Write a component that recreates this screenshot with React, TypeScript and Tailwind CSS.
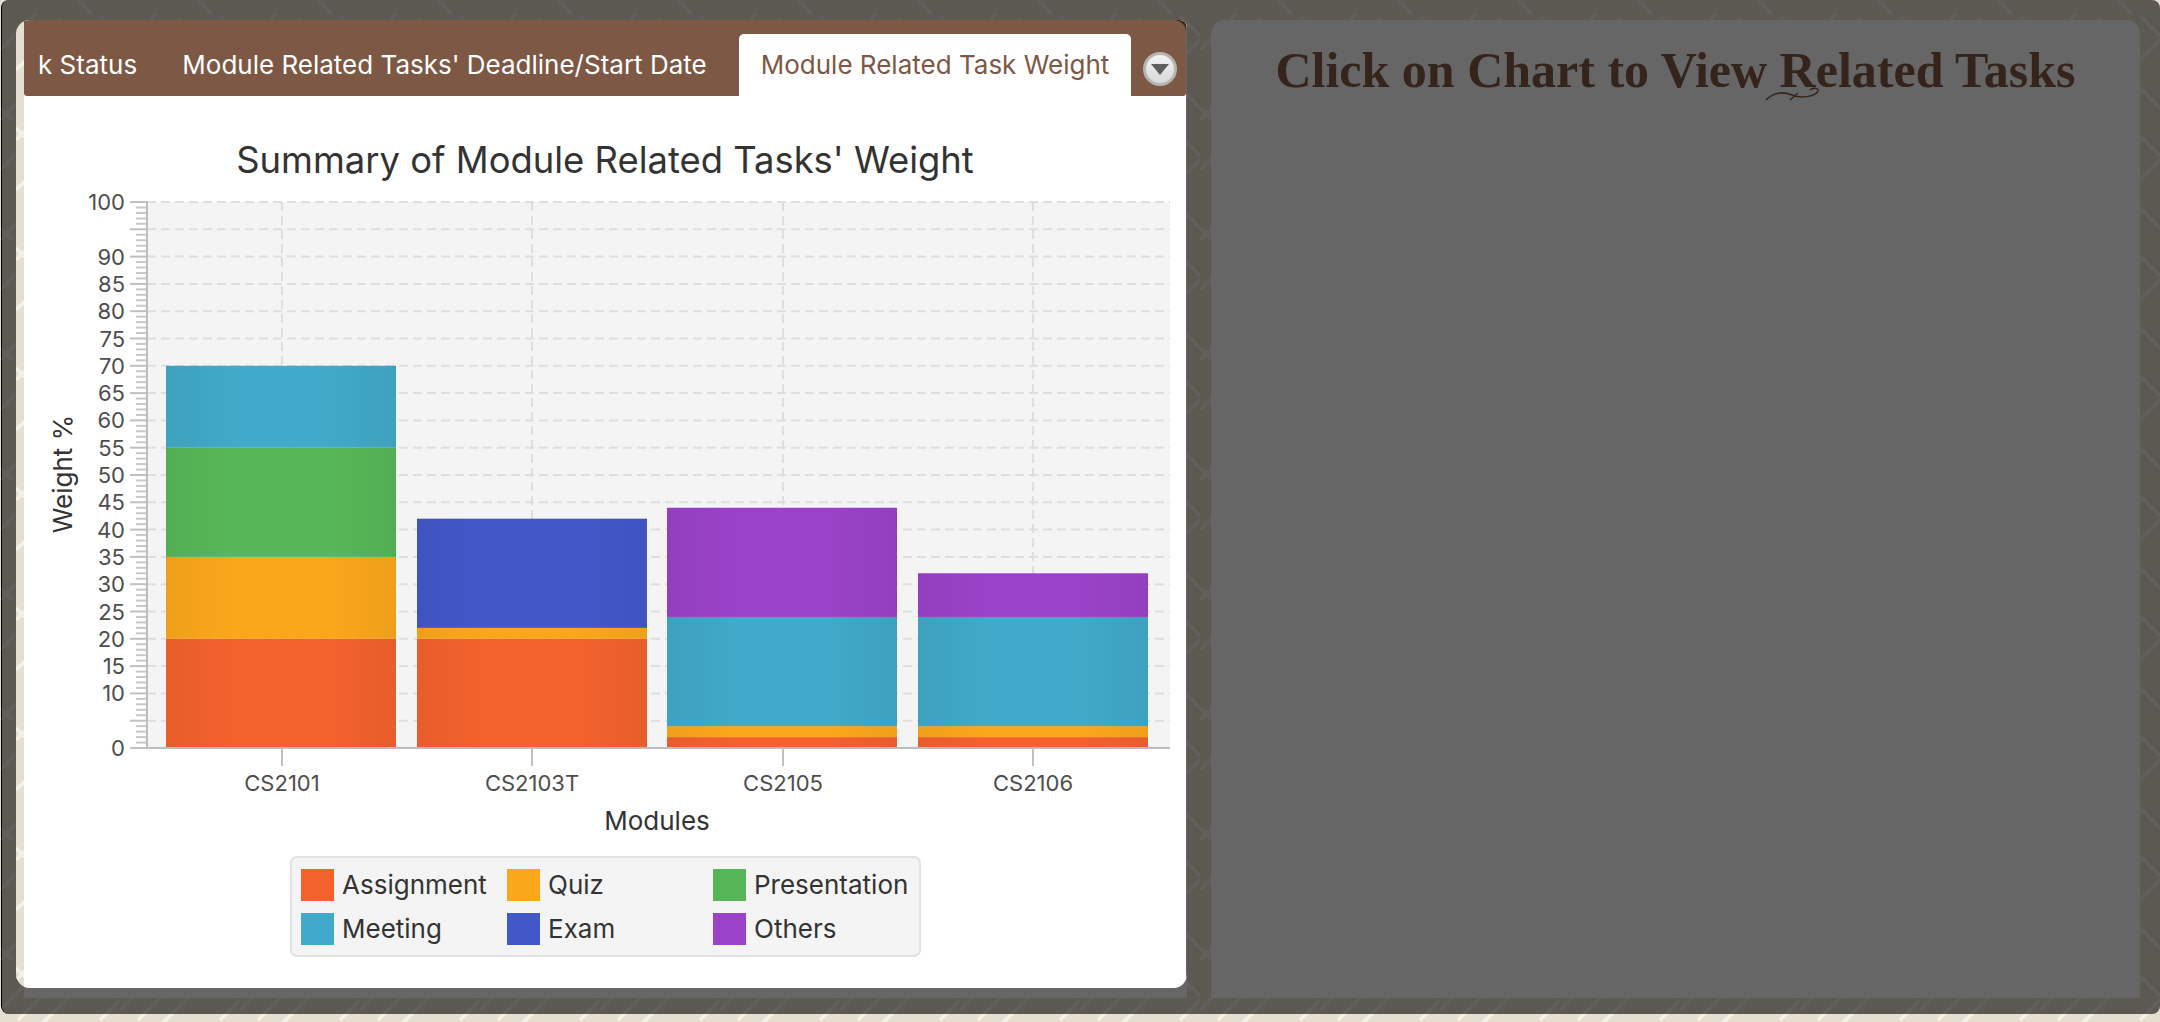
import React from "react";

const COLORS = {
  Assignment: "#f3622d",
  Quiz: "#fba71b",
  Presentation: "#57b757",
  Meeting: "#41a9c9",
  Exam: "#4258c9",
  Others: "#9a42c8",
};

type Series = keyof typeof COLORS;

const BARS: { name: string; x: number; mid: number; parts: [Series, number][] }[] = [
  { name: "CS2101", x: 166, mid: 282, parts: [["Assignment", 20], ["Quiz", 15], ["Presentation", 20], ["Meeting", 15]] },
  { name: "CS2103T", x: 417, mid: 532, parts: [["Assignment", 20], ["Quiz", 2], ["Exam", 20]] },
  { name: "CS2105", x: 667, mid: 783, parts: [["Assignment", 2], ["Quiz", 2], ["Meeting", 20], ["Others", 20]] },
  { name: "CS2106", x: 918, mid: 1033, parts: [["Assignment", 2], ["Quiz", 2], ["Meeting", 20], ["Others", 8]] },
];

const Y0 = 748;
const UNIT = 5.46;
const LEFT = 147;
const RIGHT = 1170;
const yOf = (v: number) => Y0 - v * UNIT;
const MAJOR = Array.from({ length: 21 }, (_, i) => i * 5);
const MINOR = Array.from({ length: 101 }, (_, i) => i).filter((i) => i % 5 !== 0);
const HIDDEN = [5, 95];

function Weave({ id }: { id: string }) {
  return (
    <svg className="absolute inset-0 w-full h-full" aria-hidden="true">
      <defs>
        <pattern id={id} width="120" height="120" patternUnits="userSpaceOnUse">
          <g stroke="#f4f1e9" strokeWidth="3.5" fill="none">
            <path d="M0 50 L36 14 M18 60 L60 18 M40 66 L70 36" />
            <path d="M66 78 L96 108 M84 72 L120 108 M60 96 L84 120" />
            <path d="M0 108 L12 120 M72 -6 L92 14 M100 16 L120 36" />
            <path d="M0 120 L30 90 M22 120 L52 90 M100 60 L120 40" />
          </g>
        </pattern>
      </defs>
      <rect width="100%" height="100%" fill={`url(#${id})`} />
    </svg>
  );
}

function Chart() {
  return (
    <svg viewBox="24 190 1163 650" className="block w-[1163px] h-[650px]">
      <defs>
        <linearGradient id="barShade" x1="0" x2="1" y1="0" y2="0">
          <stop offset="0" stopColor="#000" stopOpacity="0.05" />
          <stop offset="0.3" stopColor="#000" stopOpacity="0" />
          <stop offset="0.7" stopColor="#000" stopOpacity="0" />
          <stop offset="1" stopColor="#000" stopOpacity="0.05" />
        </linearGradient>
      </defs>

      <rect x={LEFT} y={yOf(100)} width={RIGHT - LEFT} height={546} fill="#f4f4f4" />

      {/* grid */}
      {MAJOR.map((v) => (
        <line key={v} x1={LEFT} x2={RIGHT} y1={yOf(v)} y2={yOf(v)} stroke="#dedede" strokeWidth="2" strokeDasharray="9 5" />
      ))}
      {BARS.map((b) => (
        <line key={b.name} x1={b.mid} x2={b.mid} y1={yOf(100)} y2={Y0} stroke="#dedede" strokeWidth="2" strokeDasharray="9 5" />
      ))}

      {/* bars */}
      {BARS.map((b) => {
        let sum = 0;
        return (
          <g key={b.name}>
            {b.parts.map(([s, v]) => {
              const top = yOf(sum + v);
              sum += v;
              return (
                <g key={s}>
                  <rect x={b.x} y={top} width={230} height={v * UNIT} fill={COLORS[s]} />
                  <rect x={b.x} y={top} width={230} height={v * UNIT} fill="url(#barShade)" />
                </g>
              );
            })}
          </g>
        );
      })}

      {/* y axis */}
      {MINOR.map((v) => (
        <line key={v} x1={136} x2={LEFT} y1={yOf(v)} y2={yOf(v)} stroke="#c8c8c8" strokeWidth="2" />
      ))}
      {MAJOR.map((v) => (
        <line key={v} x1={130} x2={LEFT} y1={yOf(v)} y2={yOf(v)} stroke="#c0c0c0" strokeWidth="2" />
      ))}
      <line x1={LEFT} x2={LEFT} y1={yOf(100) - 1} y2={Y0 + 1} stroke="#bdbdbd" strokeWidth="2" />
      <line x1={LEFT} x2={RIGHT} y1={Y0} y2={Y0} stroke="#bdbdbd" strokeWidth="2" />
      {MAJOR.filter((v) => !HIDDEN.includes(v)).map((v) => (
        <text key={v} x={125} y={yOf(v) + 8} textAnchor="end" fontSize="22" fill="#4d4d4d">
          {v}
        </text>
      ))}

      {/* x axis */}
      {BARS.map((b) => (
        <g key={b.name}>
          <line x1={b.mid} x2={b.mid} y1={Y0} y2={766} stroke="#c0c0c0" strokeWidth="2" />
          <text x={b.mid} y={791} textAnchor="middle" fontSize="22" fill="#4d4d4d">
            {b.name}
          </text>
        </g>
      ))}

      <text x={657} y={830} textAnchor="middle" fontSize="26" fill="#333">
        Modules
      </text>
      <text transform="translate(72 474) rotate(-90)" textAnchor="middle" fontSize="26" fill="#333">
        Weight %
      </text>
    </svg>
  );
}

function Legend() {
  const items: Series[] = ["Assignment", "Quiz", "Presentation", "Meeting", "Exam", "Others"];
  return (
    <div className="ml-[266px] mt-[16px] w-[631px] h-[101px] rounded-[7px] border-2 border-[#e2e2e2] bg-[#f4f4f4] pl-[9px] pt-[11px] grid grid-cols-[206px_206px_206px] gap-y-[12px] content-start">
      {items.map((s) => (
        <div key={s} className="flex items-center gap-[8px] h-[32px]">
          <span
            className="block w-[33px] h-[32px] shrink-0"
            style={{ backgroundColor: COLORS[s] }}
          />
          <span className="text-[26px] leading-none text-[#333]">{s}</span>
        </div>
      ))}
    </div>
  );
}

function TabBar() {
  return (
    <div className="relative h-[76px] shrink-0">
      <div className="absolute top-0 right-0 w-[24px] h-[24px] bg-[#33231b]" />
      <div className="relative h-full bg-[#7d5845] rounded-tr-[12px] rounded-b-[3px] flex items-end pt-[14px] text-[26px] text-white">
        <div className="w-[134px] pl-[14px] pb-[2px] h-[62px] flex items-center">k Status</div>
        <div className="w-[573px] pb-[2px] h-[62px] flex items-center justify-center whitespace-nowrap">
          Module Related Tasks' Deadline/Start Date
        </div>
        <div className="ml-[8px] w-[392px] pb-[2px] h-[62px] bg-white rounded-t-[5px] flex items-center justify-center whitespace-nowrap text-[#7d5845]">
          Module Related Task Weight
        </div>
        <div className="ml-[12px] mb-[10px] w-[34px] h-[34px] rounded-full border-[3px] border-[#b5b5b5] bg-gradient-to-b from-[#f2f2f2] to-[#d9d9d9] flex items-center justify-center">
          <svg width="18" height="12" viewBox="0 0 18 12">
            <path d="M0 1 H18 L9 12 Z" fill="#5e5e5e" />
          </svg>
        </div>
      </div>
    </div>
  );
}

export default function App() {
  return (
    <div className="relative w-full h-[1022px] overflow-hidden bg-[#e5dfd0] font-['Inter',sans-serif]">
      <Weave id="page" />
      <div className="relative ml-px h-[1014px] border-l border-black bg-black/60 rounded-[8px] flex pt-[20px] pl-[14px]">
        {/* LEFT */}
        <div className="relative w-[1171px] h-[978px] shrink-0">
          <div className="absolute left-[8px] right-0 bottom-0 h-[40px] bg-[#666]" />
          <div className="relative h-[968px] rounded-tl-[14px] rounded-tr-[8px] rounded-b-[14px] overflow-hidden bg-[#e5dfd0] pl-[8px]">
            <Weave id="strip" />
            <div className="relative h-full bg-white border-r border-[#666] flex flex-col">
              <TabBar />
              <h1 className="mt-[44px] text-center text-[36.4px] leading-[40px] text-[#333] font-normal whitespace-nowrap">
                Summary of Module Related Tasks' Weight
              </h1>
              <div className="mt-[10px]">
                <Chart />
              </div>
              <Legend />
            </div>
          </div>
        </div>

        {/* RIGHT */}
        <div className="relative ml-[24px] w-[929px] h-[978px] bg-[#666] rounded-t-[14px] pt-[24px] text-center">
          <h2 className="text-[50px] leading-[52px] font-bold text-[#35241c] whitespace-nowrap font-['Liberation_Serif',serif]">
            Click on Chart to View Related Tasks
          </h2>
          <svg className="absolute left-[553px] top-[66px]" width="60" height="16" viewBox="0 0 60 16" fill="none">
            <path
              d="M2 14 C10 6 18 5 28 9 C38 13 52 10 54 5 C55 2 49 1 46 4 M26 14 L34 7"
              stroke="#35241c"
              strokeWidth="1.5"
            />
          </svg>
        </div>
      </div>
    </div>
  );
}
